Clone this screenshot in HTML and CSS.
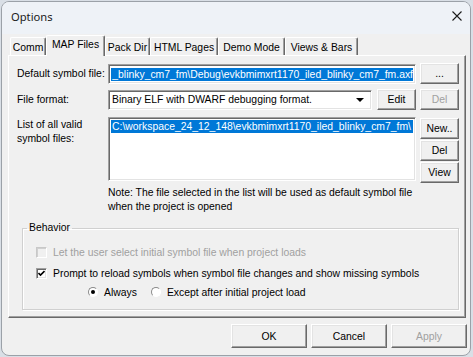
FILE: index.html
```html
<!DOCTYPE html>
<html>
<head>
<meta charset="utf-8">
<link rel="stylesheet" href="styles.css">
</head>
<body>
<div class="window">
  <div class="titlebar">
    <span class="title">Options</span>
    <svg class="close" width="10" height="10" viewBox="0 0 10 10"><path d="M0.5 0.5 L9.5 9.5 M9.5 0.5 L0.5 9.5" stroke="#1b1b1b" stroke-width="1.1" fill="none"/></svg>
  </div>
  <div class="tabs">
    <div class="tab t1">Comm</div>
    <div class="tab t2 sel">MAP Files</div>
    <div class="tab t3">Pack Dir</div>
    <div class="tab t4">HTML Pages</div>
    <div class="tab t5">Demo Mode</div>
    <div class="tab t6">Views &amp; Bars</div>
  </div>
  <div class="panel">
    <div class="row r1">
      <div class="label">Default symbol file:</div>
      <div class="field edit"><span class="hl">_blinky_cm7_fm\Debug\evkbmimxrt1170_iled_blinky_cm7_fm.axf</span></div>
      <div class="btn side">...</div>
    </div>
    <div class="row r2">
      <div class="label">File format:</div>
      <div class="field combo"><span class="ctext">Binary ELF with DWARF debugging format.</span><span class="arrow"></span></div>
      <div class="btn edit-btn">Edit</div>
      <div class="btn side dis">Del</div>
    </div>
    <div class="row r3">
      <div class="label two">List of all valid<br>symbol files:</div>
      <div class="field list"><div class="item">C:\workspace_24_12_148\evkbmimxrt1170_iled_blinky_cm7_fm\</div></div>
      <div class="sidecol">
        <div class="btn side">New..</div>
        <div class="btn side">Del</div>
        <div class="btn side">View</div>
      </div>
    </div>
    <div class="note">Note: The file selected in the list will be used as default symbol file<br>when the project is opened</div>
    <fieldset class="group">
      <legend>Behavior</legend>
      <div class="opt o1 disabled"><span class="cb dis"></span>Let the user select initial symbol file when project loads</div>
      <div class="opt o2"><span class="cb on"><svg width="7" height="7" viewBox="0 0 7 7"><path d="M0.5 3 L2.5 5 L6.5 1" stroke="#000" stroke-width="1.6" fill="none"/></svg></span>Prompt to reload symbols when symbol file changes and show missing symbols</div>
      <div class="opt o3"><span class="rb on"><span class="dot"></span></span><span class="rtext">Always</span><span class="rb"></span><span>Except after initial project load</span></div>
    </fieldset>
  </div>
  <div class="footer">
    <div class="btn big">OK</div>
    <div class="btn big">Cancel</div>
    <div class="btn big dis">Apply</div>
  </div>
</div>
</body>
</html>
```
FILE: styles.css
```css
* { box-sizing: border-box; }
html, body { margin: 0; padding: 0; }
body {
  width: 473px;
  height: 357px;
  overflow: hidden;
  background: #d9dfe6;
  font-family: "Liberation Sans", Arial, sans-serif;
  font-size: 10.4px;
  color: #000;
}
.window {
  margin: 1px 0 0 1px;
  width: 470px;
  height: 355px;
  border: 1px solid #9ba1a8;
  border-radius: 8px;
  background: #f0f0f0;
  overflow: hidden;
}
.titlebar {
  height: 32px;
  background: #eef2f7;
  display: flex;
  align-items: center;
  padding: 0 8px 4px 9px;
}
.title {
  font-family: "Noto Sans", sans-serif;
  font-size: 11.2px;
  color: #1a1a1a;
}
.close { margin-left: auto; }

.tabs {
  display: flex;
  align-items: flex-end;
  height: 21px;
  padding-left: 8px;
  position: relative;
  z-index: 1;
}
.tab {
  height: 18px;
  border-top: 1px solid #fff;
  border-left: 1px solid #fff;
  border-right: 1px solid #696969;
  box-shadow: inset -1px 0 #a0a0a0;
  border-radius: 2px 2px 0 0;
  background: #f0f0f0;
  display: flex;
  align-items: center;
  justify-content: center;
  padding-top: 1px;
}
.tab.sel {
  height: 21px;
  margin-bottom: -1px;
  padding-top: 0;
  padding-bottom: 3px;
}
.t1 { width: 36px; }
.t2 { width: 59px; }
.t3 { width: 45px; }
.t4 { width: 68px; }
.t5 { width: 67px; }
.t6 { width: 73px; }

.panel {
  margin-left: 6px;
  width: 458px;
  height: 263px;
  border: 1px solid;
  border-color: #fff #696969 #696969 #fff;
  box-shadow: inset -1px -1px #a0a0a0;
  padding: 7px 0 0 8px;
}
.row { display: flex; }
.r1 { height: 21px; align-items: center; }
.r2 { height: 21px; align-items: center; margin-top: 5px; }
.r3 { margin-top: 7px; align-items: flex-start; }
.label { width: 91px; white-space: nowrap; }
.label.two { line-height: 14px; margin-top: 1px; }

.field {
  background: #fff;
  border: 1px solid;
  border-color: #a0a0a0 #fff #fff #a0a0a0;
  box-shadow: inset 1px 1px #696969, inset -1px -1px #e3e3e3;
  overflow: hidden;
}
.edit {
  width: 308px;
  height: 20px;
  margin-right: 4px;
  padding: 3px 2px 2px 2px;
  display: flex;
  justify-content: flex-end;
  white-space: nowrap;
}
.hl {
  display: block;
  min-width: 100%;
  text-align: right;
  background: #0078d7;
  color: #fff;
  height: 13px;
  line-height: 13px;
  flex-shrink: 0;
}
.combo {
  width: 264px;
  height: 20px;
  margin-right: 5px;
  display: flex;
  align-items: center;
  padding: 0 4px 0 3px;
  white-space: nowrap;
}
.arrow {
  margin-left: auto;
  width: 0;
  height: 0;
  border-left: 4px solid transparent;
  border-right: 4px solid transparent;
  border-top: 4px solid #000;
  margin-right: 3px;
}
.list {
  width: 308px;
  height: 64px;
  margin-right: 4px;
  padding: 2px;
  white-space: nowrap;
}
.item {
  background: #0078d7;
  color: #fff;
  height: 13px;
  line-height: 13px;
  padding-left: 1px;
  overflow: hidden;
}

.btn {
  background: #f0f0f0;
  border: 1px solid;
  border-color: #fff #696969 #696969 #fff;
  box-shadow: inset -1px -1px #a0a0a0, inset 1px 1px #e3e3e3;
  display: flex;
  align-items: center;
  justify-content: center;
  white-space: nowrap;
}
.btn.dis { color: #a0a0a0; }
.side { width: 39px; height: 21px; }
.edit-btn { width: 39px; height: 21px; margin-right: 4px; }
.sidecol { display: flex; flex-direction: column; gap: 1px; margin-top: 1px; }

.note {
  margin: 3px 0 0 91px;
  line-height: 14px;
}

.group {
  margin: 7px 0 0 5px;
  width: 437px;
  height: 89px;
  padding: 0 0 0 13px;
  border: 1px solid #d0d0d0;
  box-shadow: 1px 1px #fff, inset 1px 1px #fff;
}
.group legend {
  margin-left: -9px;
  padding: 0 2px;
  line-height: 14px;
}
.opt {
  display: flex;
  align-items: center;
  height: 20px;
  white-space: nowrap;
}
.o1 { margin-top: 7px; }
.o2 { margin-top: 1px; }
.o3 { margin-top: -1px; padding-left: 52px; }
.disabled { color: #a0a0a0; }

.cb {
  width: 11px;
  height: 11px;
  margin-right: 6px;
  border: 1px solid;
  border-color: #a0a0a0 #fff #fff #a0a0a0;
  box-shadow: inset 1px 1px #696969, inset -1px -1px #e3e3e3;
  background: #fff;
  display: flex;
  align-items: center;
  justify-content: center;
}
.cb.dis {
  background: #f0f0f0;
  border-color: #c8c8c8 #fff #fff #c8c8c8;
  box-shadow: inset 1px 1px #d0d0d0;
}
.rb {
  width: 10px;
  height: 10px;
  border-radius: 50%;
  border: 1px solid;
  border-color: #8a8a8a #fff #fff #8a8a8a;
  background: #fff;
  margin-right: 6px;
  display: flex;
  align-items: center;
  justify-content: center;
}
.rb .dot {
  width: 4px;
  height: 4px;
  border-radius: 50%;
  background: #000;
}
.rtext { margin-right: 14px; }

.footer {
  display: flex;
  justify-content: flex-end;
  gap: 4px;
  margin-top: 6px;
  padding-right: 3px;
}
.big { width: 76px; height: 24px; }
```
